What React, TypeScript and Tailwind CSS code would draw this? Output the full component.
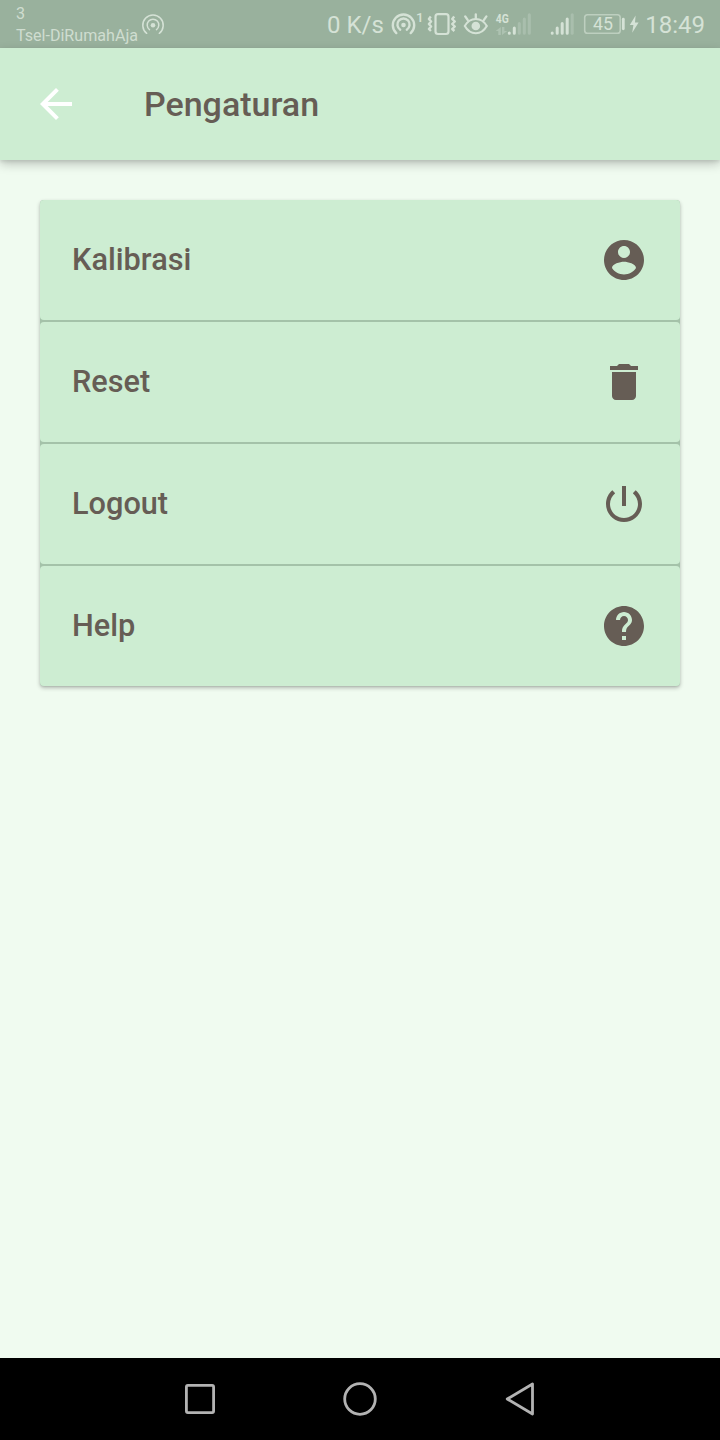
import type { ReactNode } from "react";

const FONT = "font-['Roboto','Noto_Sans',sans-serif]";

function Glyph({ d }: { d: string }) {
  return (
    <svg className="size-12 shrink-0" viewBox="0 0 24 24" fill="currentColor" aria-hidden="true">
      <path d={d} />
    </svg>
  );
}

const ARROW_BACK = "M20 11H7.83l5.59-5.59L12 4l-8 8 8 8 1.41-1.41L7.83 13H20v-2z";

const ITEMS = [
  {
    label: "Kalibrasi",
    icon: "M12 2C6.48 2 2 6.48 2 12s4.48 10 10 10 10-4.48 10-10S17.52 2 12 2zm0 3c1.66 0 3 1.34 3 3s-1.34 3-3 3-3-1.34-3-3 1.34-3 3-3zm0 14.2c-2.5 0-4.71-1.28-6-3.22.03-1.99 4-3.08 6-3.08 1.99 0 5.97 1.09 6 3.08-1.29 1.94-3.5 3.22-6 3.22z",
  },
  {
    label: "Reset",
    icon: "M6 19c0 1.1.9 2 2 2h8c1.1 0 2-.9 2-2V7H6v12zM19 4h-3.5l-1-1h-5l-1 1H5v2h14V4z",
  },
  {
    label: "Logout",
    icon: "M13 3h-2v10h2V3zm4.83 2.17l-1.42 1.42C17.99 7.86 19 9.81 19 12c0 3.87-3.13 7-7 7s-7-3.13-7-7c0-2.19 1.01-4.14 2.58-5.42L6.17 5.17C4.23 6.82 3 9.26 3 12c0 4.97 4.03 9 9 9s9-4.03 9-9c0-2.74-1.23-5.18-3.17-6.83z",
  },
  {
    label: "Help",
    icon: "M12 2C6.48 2 2 6.48 2 12s4.48 10 10 10 10-4.48 10-10S17.52 2 12 2zm1 17h-2v-2h2v2zm2.07-7.75l-.9.92C13.45 12.9 13 13.5 13 15h-2v-.5c0-1.1.45-2.1 1.17-2.83l1.24-1.26c.37-.36.59-.86.59-1.41 0-1.1-.9-2-2-2s-2 .9-2 2H8c0-2.21 1.79-4 4-4s4 1.79 4 4c0 .88-.36 1.68-.93 2.25z",
  },
];

function StatusIcon({ width, children }: { width: number; children: ReactNode }) {
  return (
    <svg className="shrink-0" width={width} height={48} viewBox={`0 0 ${width} 48`} fill="none" stroke="currentColor" aria-hidden="true">
      {children}
    </svg>
  );
}

function StatusBar() {
  return (
    <div className="flex h-12 shrink-0 items-center justify-between bg-[#99b19d] pr-[15px] pl-4 text-[#d5e2d6]">
      <div className="flex items-center">
        <div className="flex flex-col pt-[1px] text-[16.1px] leading-[22px] text-[#cfddd0]">
          <span>3</span>
          <span>Tsel-DiRumahAja</span>
        </div>
        <div className="ml-[3px]">
          <StatusIcon width={24}>
            <g strokeWidth="1.5" strokeLinecap="round">
              <path d="M5.7 33.3a10.2 10.2 0 1 1 12.6 0" />
              <path d="M8.5 29.6a5.8 5.8 0 1 1 7 0" />
            </g>
            <circle cx="12" cy="25.3" r="2.3" fill="currentColor" stroke="none" />
          </StatusIcon>
        </div>
      </div>

      <div className="flex items-center">
        <span className="w-[61px] pt-0.5 text-[24px] leading-[48px] whitespace-nowrap">0 K/s</span>
        <StatusIcon width={36}>
          <g strokeWidth="2.4" strokeLinecap="round">
            <path d="M8.3 33.1a10.7 10.7 0 1 1 14.4 0" />
            <path d="M12.2 29.7a6.1 6.1 0 1 1 6.6 0" />
          </g>
          <circle cx="15.5" cy="25" r="2.3" fill="currentColor" stroke="none" />
          <text x="28" y="22" fontSize="13.5" fontWeight="500" fill="currentColor" stroke="none">1</text>
        </StatusIcon>
        <StatusIcon width={36}>
          <rect x="11.5" y="14.2" width="13" height="19.8" rx="2.5" strokeWidth="2.2" />
          <path d="M6.8 16.6 4.9 19l2.2 2.5L4.9 24l2.2 2.5L4.9 29l2 2" strokeWidth="2.4" strokeLinejoin="round" />
          <path d="m30.2 16.6-2 2.4 2.6 2.5-2.6 2.5 2.6 2.5-2.6 2.5 2.2 2" strokeWidth="2.4" strokeLinejoin="round" />
        </StatusIcon>
        <StatusIcon width={32}>
          <path d="M4.8 26C7.5 21.2 11.5 19 15.8 19s8.3 2.2 11 7c-2.7 4.7-6.7 7.3-11 7.3S7.5 30.7 4.8 26Z" strokeWidth="2.1" />
          <circle cx="15.8" cy="26" r="4.3" fill="currentColor" stroke="none" />
          <path d="M15.8 18.5V14.3M7.8 20.2l-2.6-3.8M23.8 20.2l2.6-3.8" strokeWidth="2.3" strokeLinecap="round" />
        </StatusIcon>
        <StatusIcon width={44}>
          <text x="3.7" y="22.8" fontSize="13.5" fontWeight="700" textLength="13" lengthAdjust="spacingAndGlyphs" fill="currentColor" stroke="none">4G</text>
          <path d="M8.8 27v8H6.3v-4H3.7ZM10 35v-8h2.4v4h2.9Z" fill="currentColor" stroke="none" opacity=".35" />
          <g strokeWidth="3" strokeLinecap="round">
            <path d="M17.3 33v.3M22.3 28v5.3" />
            <path d="M27.3 23.5v9.8M32.3 19v14.3M37.3 14.8v18.5" opacity=".28" />
          </g>
        </StatusIcon>
        <StatusIcon width={44}>
          <g strokeWidth="3" strokeLinecap="round">
            <path d="M16.2 33v.3M21.2 28v5.3M26.2 23.5v9.8M31.2 19v14.3" />
            <path d="M36.2 14.8v18.5" opacity=".28" />
          </g>
        </StatusIcon>
        <StatusIcon width={63}>
          <rect x="4.7" y="14.8" width="35.5" height="18.4" rx="2.8" strokeWidth="1.6" opacity=".6" />
          <text x="12.9" y="30.3" fontSize="17.5" textLength="20" lengthAdjust="spacingAndGlyphs" fill="currentColor" stroke="none">45</text>
          <path d="M43.3 19.2v9.6" strokeWidth="2.8" strokeLinecap="round" />
          <path d="M55.6 15.5 49.8 25h3.6l-1.2 7.8 6.4-10.3h-3.6Z" fill="currentColor" stroke="none" />
        </StatusIcon>
        <span className="w-[62px] pt-0.5 text-right text-[24px] leading-[48px] whitespace-nowrap">18:49</span>
      </div>
    </div>
  );
}

export default function App() {
  return (
    <div className={`flex h-[1440px] w-[720px] flex-col overflow-hidden bg-[#f0fbf0] text-[#665d55] ${FONT}`}>
      <StatusBar />
      <header className="z-10 flex h-28 shrink-0 items-center bg-[#cdedd2] pl-8 shadow-[0_4px_10px_rgba(0,0,0,0.22),0_2px_3px_rgba(0,0,0,0.08)]">
        <button type="button" aria-label="Back" className="text-white">
          <Glyph d={ARROW_BACK} />
        </button>
        <h1 className="ml-16 text-[34px] leading-[48px] font-medium">Pengaturan</h1>
      </header>

      <main className="flex-1 px-10 pt-10">
        <div className="flex flex-col gap-0.5 rounded-[4px] bg-[#a4c2a9] shadow-[0_2px_4px_rgba(0,0,0,0.24),0_1px_2px_rgba(0,0,0,0.1)]">
          {ITEMS.map((item) => (
            <button
              key={item.label}
              type="button"
              className="flex h-[120px] items-center justify-between rounded-[4px] bg-[#cdedd2] px-8"
            >
              <span className="text-[30.7px] leading-[48px] font-medium">{item.label}</span>
              <Glyph d={item.icon} />
            </button>
          ))}
        </div>
      </main>

      <nav className="flex h-[82px] shrink-0 items-center justify-center gap-[120px] bg-black text-[#b3b3b3]">
        <svg className="size-10" viewBox="0 0 40 40" fill="none" stroke="currentColor" strokeWidth="2.8" aria-hidden="true">
          <rect x="6.4" y="6.4" width="27.2" height="27.2" rx="1.5" />
        </svg>
        <svg className="size-10" viewBox="0 0 40 40" fill="none" stroke="currentColor" strokeWidth="2.8" aria-hidden="true">
          <circle cx="20" cy="20" r="15.3" />
        </svg>
        <svg className="size-10" viewBox="0 0 40 40" fill="none" stroke="currentColor" strokeWidth="2.8" strokeLinejoin="round" aria-hidden="true">
          <path d="M32.5 5v30L7.2 20Z" />
        </svg>
      </nav>
    </div>
  );
}
